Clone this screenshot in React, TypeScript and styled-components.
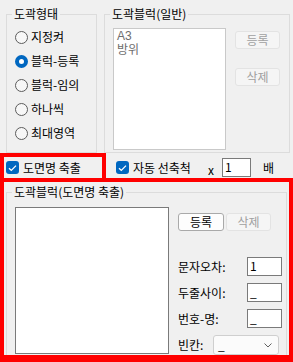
import React from 'react';
import styled, { createGlobalStyle } from 'styled-components';

const Global = createGlobalStyle`
  html, body { margin: 0; padding: 0; background: #f0f0f0; }
  body { font-family: "Noto Sans CJK KR", "Noto Sans", sans-serif; font-size: 12px; }
`;

const Page = styled.div`
  width: 293px;
  height: 362px;
  overflow: hidden;
  background: #f0f0f0;
  color: #000;
  font-family: "Noto Sans CJK KR", "Noto Sans", sans-serif;
  font-size: 12px;
  line-height: 16px;
  display: flex;
  flex-direction: column;
`;

const TopRow = styled.div`
  display: flex;
  gap: 7px;
  padding: 6px 0 0 6px;
  height: 147px;
`;

const Group = styled.fieldset<{ $w: number; $h?: number }>`
  margin: 0;
  padding: 0;
  min-width: 0;
  box-sizing: border-box;
  border: 1px solid #dcdcdc;
  width: ${(p) => p.$w}px;
  ${(p) => (p.$h ? `height: ${p.$h}px;` : '')}
`;

const Legend = styled.legend`
  margin-left: 5px;
  padding: 0 2px;
  line-height: 16px;
  font-size: 12px;
`;

const RadioList = styled.div`
  display: flex;
  flex-direction: column;
  padding: 3px 0 0 8px;
`;

const RadioRow = styled.div`
  display: flex;
  align-items: center;
  gap: 3px;
  height: 24px;
  white-space: nowrap;
`;

const RadioDot = styled.span<{ $checked?: boolean }>`
  flex: none;
  width: 13px;
  height: 13px;
  border-radius: 50%;
  box-sizing: border-box;
  border: ${(p) => (p.$checked ? '4px solid #0067c0' : '1px solid #5c5c5c')};
  background: ${(p) => (p.$checked ? '#ffffff' : '#f7f7f7')};
`;

const ListRow = styled.div`
  display: flex;
  align-items: flex-start;
  gap: 9px;
  padding: 6px 0 0 8px;
`;

const ListBox = styled.div<{ $w: number; $h: number; $disabled?: boolean }>`
  flex: none;
  width: ${(p) => p.$w}px;
  height: ${(p) => p.$h}px;
  box-sizing: border-box;
  background: #ffffff;
  border: 1px solid ${(p) => (p.$disabled ? '#c9c9c9' : '#7a7a7a')};
  color: #6d6d6d;
  padding: 0 0 0 3px;
  font-family: "Liberation Sans", "Noto Sans CJK KR", sans-serif;
  line-height: 14px;
`;

const ListItem = styled.div`
  white-space: nowrap;
`;

const ButtonColumn = styled.div`
  display: flex;
  flex-direction: column;
  gap: 19px;
  padding-top: 3px;
`;

const Button = styled.button<{ $w: number }>`
  width: ${(p) => p.$w}px;
  height: 18px;
  box-sizing: border-box;
  padding: 0;
  margin: 0;
  font-family: inherit;
  font-size: 12px;
  line-height: 16px;
  border-radius: 3px;
  border: 1px solid #a9a9a9;
  background: #fdfdfd;
  color: #000;
  &:disabled {
    border-color: #e3e3e3;
    background: #f5f5f5;
    color: #a0a0a0;
  }
`;

const OptionRow = styled.div`
  display: flex;
  align-items: flex-end;
  height: 25px;
`;

const HighlightTop = styled.div`
  width: 106px;
  height: 25px;
  box-sizing: border-box;
  border: 4px solid #ff0000;
  border-bottom: none;
  display: flex;
  align-items: center;
  padding-left: 2px;
`;

const OptionRest = styled.div`
  display: flex;
  align-items: center;
  height: 21px;
  padding-left: 10px;
  white-space: nowrap;
`;

const CheckRow = styled.div`
  display: flex;
  align-items: center;
  gap: 4px;
  white-space: nowrap;
`;

const CheckBox = styled.span`
  flex: none;
  width: 13px;
  height: 13px;
  border-radius: 3px;
  background: #0067c0;
  display: flex;
  align-items: center;
  justify-content: center;
`;

const Times = styled.span`
  margin-left: 17px;
  line-height: 12px;
  padding-top: 4px;
`;

const Unit = styled.span`
  margin-left: 12px;
`;

const TextBox = styled.div<{ $w: number; $ml?: number }>`
  flex: none;
  width: ${(p) => p.$w}px;
  height: 19px;
  box-sizing: border-box;
  border: 1px solid #7a7a7a;
  background: #ffffff;
  padding: 0 2px;
  line-height: 16px;
  margin-left: ${(p) => (p.$ml !== undefined ? `${p.$ml}px` : 'auto')};
`;

const HighlightBox = styled.div`
  height: 184px;
  box-sizing: border-box;
  border: 4px solid #ff0000;
  border-bottom-width: 7px;
  overflow: hidden;
  padding: 2px 2px 0;
`;

const ExtractBody = styled.div`
  display: flex;
  align-items: flex-start;
  gap: 9px;
  padding: 7px 0 12px 8px;
`;

const RightColumn = styled.div`
  width: 104px;
  display: flex;
  flex-direction: column;
  padding-top: 6px;
`;

const ButtonRow = styled.div`
  display: flex;
  gap: 2px;
`;

const FieldList = styled.div`
  display: flex;
  flex-direction: column;
  gap: 7px;
  margin-top: 26px;
`;

const FieldRow = styled.div`
  display: flex;
  align-items: center;
  min-height: 19px;
  white-space: nowrap;
`;

const Select = styled.div`
  width: 66px;
  height: 20px;
  box-sizing: border-box;
  margin-left: auto;
  margin-right: 3px;
  border: 1px solid #cfcfcf;
  border-radius: 3px;
  background: #fbfbfb;
  display: flex;
  align-items: center;
  justify-content: space-between;
  padding: 0 6px 0 4px;
  line-height: 16px;
`;

const Check = () => (
  <svg width="9" height="8" viewBox="0 0 9 8">
    <path d="M1 4.2 L3.3 6.4 L8 1.6" fill="none" stroke="#fff" strokeWidth="1.3" />
  </svg>
);

const Chevron = () => (
  <svg width="8" height="5" viewBox="0 0 8 5">
    <path d="M0.5 0.5 L4 4 L7.5 0.5" fill="none" stroke="#606060" strokeWidth="1" />
  </svg>
);

const radios = [
  { label: '지정켜', checked: false },
  { label: '블럭-등록', checked: true },
  { label: '블럭-임의', checked: false },
  { label: '하나씩', checked: false },
  { label: '최대영역', checked: false },
];

const fields = [
  { label: '문자오차:', value: '1' },
  { label: '두줄사이:', value: '_' },
  { label: '번호-명:', value: '_' },
];

export default function App() {
  return (
    <>
      <Global />
      <Page>
        <TopRow>
          <Group $w={91} $h={147}>
            <Legend>도곽형태</Legend>
            <RadioList>
              {radios.map((r) => (
                <RadioRow key={r.label}>
                  <RadioDot $checked={r.checked} />
                  {r.label}
                </RadioRow>
              ))}
            </RadioList>
          </Group>
          <Group $w={186} $h={147}>
            <Legend>도곽블럭(일반)</Legend>
            <ListRow>
              <ListBox $w={113} $h={122} $disabled>
                <ListItem>A3</ListItem>
                <ListItem>방위</ListItem>
              </ListBox>
              <ButtonColumn>
                <Button $w={45} disabled>등록</Button>
                <Button $w={45} disabled>삭제</Button>
              </ButtonColumn>
            </ListRow>
          </Group>
        </TopRow>
        <OptionRow>
          <HighlightTop>
            <CheckRow>
              <CheckBox><Check /></CheckBox>
              도면명 축출
            </CheckRow>
          </HighlightTop>
          <OptionRest>
            <CheckRow>
              <CheckBox><Check /></CheckBox>
              자동 선축척
            </CheckRow>
            <Times>x</Times>
            <TextBox $w={29} $ml={8}>1</TextBox>
            <Unit>배</Unit>
          </OptionRest>
        </OptionRow>
        <HighlightBox>
          <Group $w={281}>
            <Legend>도곽블럭(도면명 축출)</Legend>
            <ExtractBody>
              <ListBox $w={154} $h={147} />
              <RightColumn>
                <ButtonRow>
                  <Button $w={46}>등록</Button>
                  <Button $w={45} disabled>삭제</Button>
                </ButtonRow>
                <FieldList>
                  {fields.map((f) => (
                    <FieldRow key={f.label}>
                      {f.label}
                      <TextBox $w={35}>{f.value}</TextBox>
                    </FieldRow>
                  ))}
                  <FieldRow>
                    빈칸:
                    <Select>
                      <span>_</span>
                      <Chevron />
                    </Select>
                  </FieldRow>
                </FieldList>
              </RightColumn>
            </ExtractBody>
          </Group>
        </HighlightBox>
      </Page>
    </>
  );
}
